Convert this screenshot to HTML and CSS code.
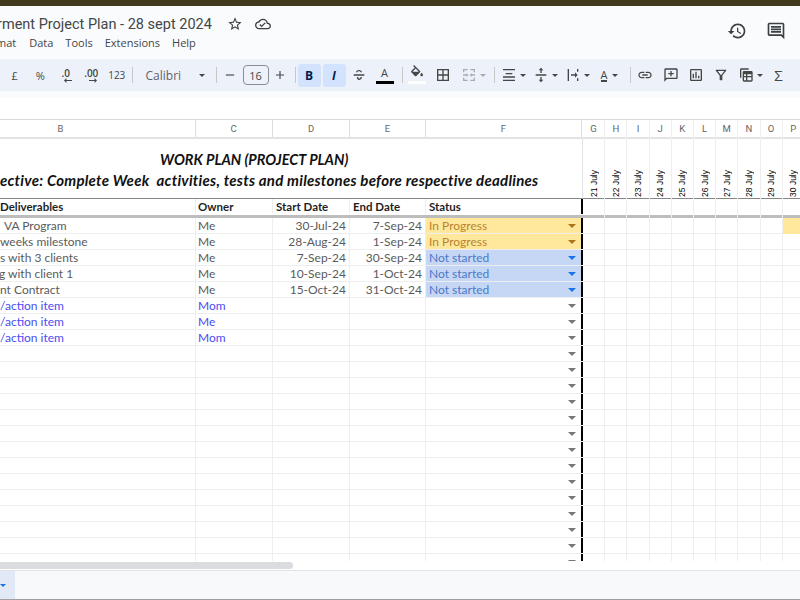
FILE: index.html
```html
<!DOCTYPE html>
<html lang="en">
<head>
	<meta charset="UTF-8">
	<title>Project Plan</title>
	<link rel="stylesheet" href="styles.css">
</head>
<body>
	<div class="top-strip"></div>

	<header class="doc-header">
		<div class="doc-left">
			<div class="title-line">
				<span class="doc-title">rment Project Plan - 28 sept 2024</span>
				<svg class="doc-icon star" viewBox="0 0 24 24"><path d="M22 9.24l-7.19-.62L12 2 9.19 8.63 2 9.24l5.46 4.73L5.82 21 12 17.27 18.18 21l-1.63-7.03L22 9.24zM12 15.4l-3.76 2.27 1-4.28-3.32-2.88 4.38-.38L12 6.1l1.71 4.04 4.38.38-3.32 2.88 1 4.28L12 15.4z"/></svg>
				<svg class="doc-icon cloud" viewBox="0 0 24 24"><path d="M19.35 10.04C18.67 6.59 15.64 4 12 4 9.11 4 6.6 5.64 5.35 8.04 2.34 8.36 0 10.91 0 14c0 3.31 2.69 6 6 6h13c2.76 0 5-2.24 5-5 0-2.64-2.05-4.78-4.65-4.96zM19 18H6c-2.21 0-4-1.79-4-4 0-2.05 1.53-3.76 3.56-3.97l1.07-.11.5-.95C8.08 7.14 9.94 6 12 6c2.62 0 4.88 1.86 5.39 4.43l.3 1.5 1.53.11c1.56.1 2.78 1.41 2.78 2.96 0 1.65-1.35 3-3 3zm-9-3.82l-2.09-2.09L6.5 13.5 10 17l6.01-6.01-1.41-1.41z"/></svg>
			</div>
			<nav class="menu">
				<span class="menu-clip">mat</span>
				<span>Data</span>
				<span>Tools</span>
				<span>Extensions</span>
				<span>Help</span>
			</nav>
		</div>
		<div class="doc-right">
			<svg class="head-icon" viewBox="0 0 24 24"><path d="M13 3c-4.97 0-9 4.03-9 9H1l3.89 3.89.07.14L9 12H6c0-3.87 3.13-7 7-7s7 3.13 7 7-3.13 7-7 7c-1.93 0-3.68-.79-4.94-2.06l-1.42 1.42C8.27 19.99 10.51 21 13 21c4.97 0 9-4.03 9-9s-4.03-9-9-9zm-1 5v5l4.28 2.54.72-1.21-3.5-2.08V8H12z"/></svg>
			<svg class="head-icon" viewBox="0 0 24 24"><path d="M21.99 4c0-1.1-.89-2-1.99-2H4c-1.1 0-2 .9-2 2v12c0 1.1.9 2 2 2h14l4 4-.01-18zM20 4v13.17L18.83 16H4V4h16zM6 12h12v2H6zm0-3h12v2H6zm0-3h12v2H6z"/></svg>
		</div>
	</header>

	<div class="toolbar">
		<span class="tool num">£</span>
		<span class="tool num">%</span>
		<span class="tool num dec">.0<svg viewBox="0 0 10 6"><path d="M10 2.5H3V0L0 3l3 3V3.500h7z"/></svg></span>
		<span class="tool num dec">.00<svg viewBox="0 0 10 6"><path d="M0 2.500h7V0l3 3-3 3V3.500H0z"/></svg></span>
		<span class="tool num small">123</span>
		<span class="sep"></span>
		<span class="font-select">Calibri<i class="caret"></i></span>
		<span class="sep"></span>
		<span class="tool step minus"><svg viewBox="0 0 24 24"><path d="M5 11h14v2H5z"/></svg></span>
		<span class="size-box">16</span>
		<span class="tool step plus"><svg viewBox="0 0 24 24"><path d="M19 13h-6v6h-2v-6H5v-2h6V5h2v6h6z"/></svg></span>
		<span class="sep sep-format"></span>
		<span class="tool on bold">B</span>
		<span class="tool on italic">I</span>
		<span class="tool strike"><svg viewBox="0 0 24 24"><path d="M4 11h16v2H4zM7.500 8c0-2 2-3.500 4.500-3.500S16.500 6 16.500 8h-2c0-1-1-1.700-2.500-1.700S9.500 7 9.500 8zM9 15h2c0 1.300.5 2.500 1 2.500s2.500-.5 2.500-2.500h2c0 2.500-2 4.500-4.500 4.500S9 17.500 9 15z"/></svg></span>
		<span class="tool text-color">A<i></i></span>
		<span class="sep sep-cell"></span>
		<span class="tool fill"><svg viewBox="0 0 24 24"><path d="M16.560 8.940L7.620 0 6.210 1.410l2.380 2.380-5.150 5.150c-.59.59-.59 1.540 0 2.120l5.500 5.500c.29.29.68.44 1.060.44s.77-.15 1.060-.44l5.500-5.500c.59-.58.59-1.530 0-2.120zM5.210 10L10 5.210 14.790 10H5.210zM19 11.500s-2 2.170-2 3.500c0 1.100.9 2 2 2s2-.9 2-2c0-1.330-2-3.500-2-3.500z"/></svg><i></i></span>
		<span class="tool"><svg viewBox="0 0 24 24"><path d="M3 3v18h18V3H3zm8 16H5v-6h6v6zm0-8H5V5h6v6zm8 8h-6v-6h6v6zm0-8h-6V5h6v6z"/></svg></span>
		<span class="tool split off"><svg viewBox="0 0 24 24"><path d="M3 3h7v2H5v3H3zM14 3h7v5h-2V5h-5zM3 16h2v3h5v2H3zM19 16h2v5h-7v-2h5zM3 11h5V9l3 3-3 3v-2H3zM21 11h-5V9l-3 3 3 3v-2h5z"/></svg><i class="caret"></i></span>
		<span class="sep sep-align"></span>
		<span class="tool split"><svg viewBox="0 0 24 24"><path d="M3 3h18v2H3zM7 9h10v2H7zM3 14h18v2H3zM3 19h18v2H3z"/></svg><i class="caret"></i></span>
		<span class="tool split"><svg viewBox="0 0 24 24"><path d="M4 11h16v2H4zM12 1l3.500 4H13v4h-2V5H8.500zM12 23l-3.500-4H11v-4h2v4h2.500z"/></svg><i class="caret"></i></span>
		<span class="tool split"><svg viewBox="0 0 24 24"><path d="M4 3h2v18H4zM18 3h2v4h-2zM18 17h2v4h-2zM9 11h6V8l4 4-4 4v-3H9z"/></svg><i class="caret"></i></span>
		<span class="tool split rotate"><b>A</b><i class="caret"></i></span>
		<span class="sep sep-insert"></span>
		<span class="tool"><svg viewBox="0 0 24 24"><path d="M3.900 12c0-1.710 1.390-3.100 3.100-3.100h4V7H7c-2.760 0-5 2.240-5 5s2.240 5 5 5h4v-1.900H7c-1.710 0-3.100-1.390-3.100-3.100zM8 13h8v-2H8v2zm9-6h-4v1.900h4c1.710 0 3.100 1.390 3.100 3.100s-1.390 3.100-3.100 3.100h-4V17h4c2.760 0 5-2.240 5-5s-2.240-5-5-5z"/></svg></span>
		<span class="tool"><svg viewBox="0 0 24 24"><path d="M20 2H4c-1.100 0-2 .9-2 2v18l4-4h14c1.100 0 2-.9 2-2V4c0-1.100-.9-2-2-2zm0 14H5.170L4 17.170V4h16v12zM11 14h2v-3h3V9h-3V6h-2v3H8v2h3z"/></svg></span>
		<span class="tool slim"><svg viewBox="0 0 24 24"><path d="M19 3H5c-1.100 0-2 .9-2 2v14c0 1.100.9 2 2 2h14c1.100 0 2-.9 2-2V5c0-1.100-.9-2-2-2zm0 16H5V5h14v14zM7 10h2v7H7zm4-3h2v10h-2zm4 6h2v4h-2z"/></svg></span>
		<span class="tool slim"><svg viewBox="0 0 24 24"><path d="M7 6h10l-5.010 6.300L7 6zm-2.750-.39C6.270 8.200 10 13 10 13v6c0 .55.45 1 1 1h2c.55 0 1-.45 1-1v-6s3.720-4.800 5.740-7.390c.51-.66.04-1.610-.79-1.610H5.040c-.83 0-1.300.95-.79 1.610z"/></svg></span>
		<span class="tool split"><svg viewBox="0 0 24 24"><path d="M5 2h11v2H5v12H3V4c0-1.100.9-2 2-2zM9 6h11c1.100 0 2 .9 2 2v12c0 1.100-.9 2-2 2H9c-1.100 0-2-.9-2-2V8c0-1.100.9-2 2-2zm0 5v2.500h3V11zm5 0v2.500h6V11zm-5 4.500V20h3v-4.500zm5 0V20h6v-4.500z"/></svg><i class="caret"></i></span>
		<span class="tool sigma">Σ</span>
	</div>
	<div class="toolbar-under"></div>
	<div class="formula-gap"></div>

	<div class="sheet">
		<div class="main">
			<div class="col-heads">
				<span class="cell cb">B</span>
				<span class="cell cc">C</span>
				<span class="cell cd">D</span>
				<span class="cell ce">E</span>
				<span class="cell cf">F</span>
			</div>
			<div class="plan-title">
				<p class="plan-name">WORK PLAN (PROJECT PLAN)</p>
				<p class="plan-goal">ective: Complete Week  activities, tests and milestones before respective deadlines</p>
			</div>
			<div class="row head-row">
				<span class="cell cb">Deliverables</span>
				<span class="cell cc">Owner</span>
				<span class="cell cd">Start Date</span>
				<span class="cell ce">End Date</span>
				<span class="cell cf">Status</span>
			</div>
			<div class="row">
				<span class="cell cb indent">VA Program</span>
				<span class="cell cc">Me</span>
				<span class="cell cd">30-Jul-24</span>
				<span class="cell ce">7-Sep-24</span>
				<span class="cell cf progress">In Progress<i class="drop"></i></span>
			</div>
			<div class="row">
				<span class="cell cb">weeks milestone</span>
				<span class="cell cc">Me</span>
				<span class="cell cd">28-Aug-24</span>
				<span class="cell ce">1-Sep-24</span>
				<span class="cell cf progress">In Progress<i class="drop"></i></span>
			</div>
			<div class="row">
				<span class="cell cb">s with 3 clients</span>
				<span class="cell cc">Me</span>
				<span class="cell cd">7-Sep-24</span>
				<span class="cell ce">30-Sep-24</span>
				<span class="cell cf waiting">Not started<i class="drop"></i></span>
			</div>
			<div class="row">
				<span class="cell cb clip">g with client 1</span>
				<span class="cell cc">Me</span>
				<span class="cell cd">10-Sep-24</span>
				<span class="cell ce">1-Oct-24</span>
				<span class="cell cf waiting">Not started<i class="drop"></i></span>
			</div>
			<div class="row">
				<span class="cell cb">nt Contract</span>
				<span class="cell cc">Me</span>
				<span class="cell cd">15-Oct-24</span>
				<span class="cell ce">31-Oct-24</span>
				<span class="cell cf waiting">Not started<i class="drop"></i></span>
			</div>
			<div class="row todo">
				<span class="cell cb">/action item</span>
				<span class="cell cc">Mom</span>
				<span class="cell cd"></span>
				<span class="cell ce"></span>
				<span class="cell cf"><i class="drop"></i></span>
			</div>
			<div class="row todo">
				<span class="cell cb">/action item</span>
				<span class="cell cc">Me</span>
				<span class="cell cd"></span>
				<span class="cell ce"></span>
				<span class="cell cf"><i class="drop"></i></span>
			</div>
			<div class="row todo">
				<span class="cell cb">/action item</span>
				<span class="cell cc">Mom</span>
				<span class="cell cd"></span>
				<span class="cell ce"></span>
				<span class="cell cf"><i class="drop"></i></span>
			</div>
			<div class="row"><span class="cell cb"></span><span class="cell cc"></span><span class="cell cd"></span><span class="cell ce"></span><span class="cell cf"><i class="drop"></i></span></div>
			<div class="row"><span class="cell cb"></span><span class="cell cc"></span><span class="cell cd"></span><span class="cell ce"></span><span class="cell cf"><i class="drop"></i></span></div>
			<div class="row"><span class="cell cb"></span><span class="cell cc"></span><span class="cell cd"></span><span class="cell ce"></span><span class="cell cf"><i class="drop"></i></span></div>
			<div class="row"><span class="cell cb"></span><span class="cell cc"></span><span class="cell cd"></span><span class="cell ce"></span><span class="cell cf"><i class="drop"></i></span></div>
			<div class="row"><span class="cell cb"></span><span class="cell cc"></span><span class="cell cd"></span><span class="cell ce"></span><span class="cell cf"><i class="drop"></i></span></div>
			<div class="row"><span class="cell cb"></span><span class="cell cc"></span><span class="cell cd"></span><span class="cell ce"></span><span class="cell cf"><i class="drop"></i></span></div>
			<div class="row"><span class="cell cb"></span><span class="cell cc"></span><span class="cell cd"></span><span class="cell ce"></span><span class="cell cf"><i class="drop"></i></span></div>
			<div class="row"><span class="cell cb"></span><span class="cell cc"></span><span class="cell cd"></span><span class="cell ce"></span><span class="cell cf"><i class="drop"></i></span></div>
			<div class="row"><span class="cell cb"></span><span class="cell cc"></span><span class="cell cd"></span><span class="cell ce"></span><span class="cell cf"><i class="drop"></i></span></div>
			<div class="row"><span class="cell cb"></span><span class="cell cc"></span><span class="cell cd"></span><span class="cell ce"></span><span class="cell cf"><i class="drop"></i></span></div>
			<div class="row"><span class="cell cb"></span><span class="cell cc"></span><span class="cell cd"></span><span class="cell ce"></span><span class="cell cf"><i class="drop"></i></span></div>
			<div class="row"><span class="cell cb"></span><span class="cell cc"></span><span class="cell cd"></span><span class="cell ce"></span><span class="cell cf"><i class="drop"></i></span></div>
			<div class="row"><span class="cell cb"></span><span class="cell cc"></span><span class="cell cd"></span><span class="cell ce"></span><span class="cell cf"><i class="drop"></i></span></div>
			<div class="row"><span class="cell cb"></span><span class="cell cc"></span><span class="cell cd"></span><span class="cell ce"></span><span class="cell cf"><i class="drop"></i></span></div>
		</div>
		<div class="days">
			<div class="day"><span class="day-letter">G</span><span class="day-date"><b>21 July</b></span><span class="day-head"></span><span class="day-cells"></span></div>
			<div class="day"><span class="day-letter">H</span><span class="day-date"><b>22 July</b></span><span class="day-head"></span><span class="day-cells"></span></div>
			<div class="day"><span class="day-letter">I</span><span class="day-date"><b>23 July</b></span><span class="day-head"></span><span class="day-cells"></span></div>
			<div class="day"><span class="day-letter">J</span><span class="day-date"><b>24 July</b></span><span class="day-head"></span><span class="day-cells"></span></div>
			<div class="day"><span class="day-letter">K</span><span class="day-date"><b>25 July</b></span><span class="day-head"></span><span class="day-cells"></span></div>
			<div class="day"><span class="day-letter">L</span><span class="day-date"><b>26 July</b></span><span class="day-head"></span><span class="day-cells"></span></div>
			<div class="day"><span class="day-letter">M</span><span class="day-date"><b>27 July</b></span><span class="day-head"></span><span class="day-cells"></span></div>
			<div class="day"><span class="day-letter">N</span><span class="day-date"><b>28 July</b></span><span class="day-head"></span><span class="day-cells"></span></div>
			<div class="day"><span class="day-letter">O</span><span class="day-date"><b>29 July</b></span><span class="day-head"></span><span class="day-cells"></span></div>
			<div class="day"><span class="day-letter">P</span><span class="day-date"><b>30 July</b></span><span class="day-head"></span><span class="day-cells"><i class="day-mark"></i></span></div>
		</div>
	</div>

	<div class="scroll-track"><div class="scroll-thumb"></div></div>

	<footer class="tabs-bar">
		<div class="tab-stub"><i class="caret"></i></div>
	</footer>
</body>
</html>
```

FILE: styles.css
```css
* {
	box-sizing: border-box;
}
html, body {
	margin: 0;
	height: 100%;
}
body {
	width: 800px;
	height: 600px;
	overflow: hidden;
	display: flex;
	flex-direction: column;
	background-color: #f9fbfd;
	font-family: "Open Sans", "Liberation Sans", sans-serif;
	color: #444746;
}
p {
	margin: 0;
}

.top-strip {
	height: 6px;
	flex: none;
	background-color: #423a1e;
}

/* title + menu */
.doc-header {
	height: 53px;
	display: flex;
	justify-content: space-between;
	flex: none;
}
.doc-left {
	padding-top: 6px;
}
.title-line {
	height: 24px;
	display: flex;
	align-items: center;
}
.doc-title {
	margin-left: -3px;
	font-family: "Roboto", sans-serif;
	font-size: 14.500px;
	color: #444746;
	white-space: nowrap;
}
.doc-icon {
	width: 16px;
	height: 16px;
	margin-left: 12px;
	fill: #3c4043;
}
.doc-icon.star {
	margin-left: 15px;
}
.menu {
	margin-top: -1px;
	display: flex;
	gap: 12px;
	font-size: 11px;
	line-height: 16px;
	color: #444746;
}
.menu-clip {
	margin-left: -4px;
	margin-right: 1px;
}
.doc-right {
	display: flex;
	gap: 19px;
	padding: 15px 14px 0 0;
}
.head-icon {
	width: 20px;
	height: 20px;
	fill: #3c4043;
}

/* toolbar */
.toolbar {
	height: 32px;
	flex: none;
	display: flex;
	align-items: center;
	gap: 2px;
	padding-left: 3px;
	background-color: #edf2fa;
	font-size: 11px;
}
.tool {
	width: 24px;
	height: 23px;
	display: flex;
	flex: none;
	align-items: center;
	justify-content: center;
	border-radius: 3px;
	position: relative;
	color: #444746;
}
.tool svg {
	width: 16px;
	height: 16px;
	fill: #444746;
}
.tool.num {
	width: 23.500px;
}
.tool.small {
	font-size: 10px;
}
.tool.dec {
	flex-direction: column;
	font-weight: 600;
	font-size: 10px;
	line-height: 9px;
	padding-top: 2px;
}
.tool.dec svg {
	width: 8px;
	height: 5px;
	margin-left: 4px;
}
.sep {
	width: 1px;
	height: 16px;
	flex: none;
	margin: 0 1px;
	background-color: #c7c7c7;
}
.sep-format {
	margin: 0 0 0 4px;
}
.sep-cell {
	margin: 0 0 0 3px;
}
.sep-align {
	margin: 0 1px 0 3px;
}
.sep-insert {
	margin: 0 0 0 2px;
}
.font-select {
	width: 67px;
	margin: 0 8px 0 2px;
	display: flex;
	justify-content: space-between;
	align-items: center;
	font-size: 12px;
	padding-left: 8px;
	color: #5f6368;
}
.caret {
	width: 0;
	height: 0;
	display: block;
	flex: none;
	border-left: 3.500px solid transparent;
	border-right: 3.500px solid transparent;
	border-top: 3.500px solid #444746;
}
.tool.step {
	width: 18px;
}
.tool.step svg {
	width: 14px;
	height: 14px;
}
.tool.minus {
	margin-left: 1px;
}
.size-box {
	width: 26px;
	height: 20px;
	margin-left: 2px;
	flex: none;
	display: flex;
	align-items: center;
	justify-content: center;
	border: 1px solid #8a8d91;
	border-radius: 4px;
	font-size: 11px;
	color: #444746;
}
.tool.on {
	width: 23px;
	background-color: #d3e3fd;
	font-size: 12px;
	color: #041e49;
}
.tool.bold {
	font-weight: 700;
}
.tool.italic {
	font-style: italic;
	font-weight: 700;
}
.tool.strike {
	width: 23px;
}
.tool.slim {
	width: 23px;
}
.text-color {
	font-size: 11px;
	line-height: 12px;
	padding-bottom: 5px;
}
.text-color i {
	position: absolute;
	left: 3px;
	right: 3px;
	bottom: 3px;
	height: 3px;
	background-color: #000000;
}
.fill svg {
	margin-bottom: 5px;
}
.fill i {
	position: absolute;
	left: 3px;
	right: 3px;
	bottom: 3px;
	height: 3px;
	background-color: #ffffff;
}
.tool.split {
	width: 30px;
	justify-content: flex-start;
	gap: 3px;
	padding-left: 3px;
}
.tool.off {
	width: 32px;
	opacity: 0.4;
	padding-left: 4px;
}
.tool.rotate {
	margin-left: 2px;
}
.rotate b {
	font-size: 11px;
	font-weight: 400;
	border-bottom: 2px solid #444746;
	line-height: 11px;
	margin: 0 2px;
}
.sigma {
	font-size: 15px;
}
.toolbar-under {
	height: 7px;
	flex: none;
	background-color: #f9fbfd;
}
.formula-gap {
	height: 21px;
	flex: none;
	background-color: #ffffff;
}

/* sheet */
.sheet {
	height: 442px;
	flex: none;
	display: flex;
	overflow: hidden;
	background-color: #ffffff;
	font-family: "Lato", "Liberation Sans", sans-serif;
	font-size: 12px;
	color: #5b5b5b;
	border-top: 1px solid #d9d9d9;
}
.main {
	width: 583px;
	flex: none;
}
.col-heads, .row {
	display: flex;
}
.col-heads {
	height: 19px;
	border-bottom: 2px solid #e3e3e3;
	font-family: "Roboto", sans-serif;
	font-size: 9.500px;
	color: #666666;
}
.col-heads .cell {
	justify-content: center;
	border-right: 1px solid #dedede;
}
.col-heads .cb {
	padding-right: 74px;
}
.cell {
	display: flex;
	align-items: center;
	flex: none;
	position: relative;
	white-space: nowrap;
	overflow: hidden;
	padding: 0 3px;
	line-height: 14px;
	border-right: 1px solid #eeeeee;
}
.cb { width: 196px; padding-left: 0; }
.cc { width: 77px; padding-left: 2px; }
.cd { width: 77px; justify-content: flex-end; }
.ce { width: 76px; justify-content: flex-end; }
.cf { width: 157px; }
.col-heads .cf { width: 156px; }
.indent { padding-left: 4px; }
.clip { padding-left: 0; text-indent: -1px; }

.plan-title {
	height: 60px;
	padding-top: 11px;
	border-bottom: 1px solid #858585;
	border-right: 1px solid #e3e3e3;
	font-weight: 700;
	font-style: italic;
	font-size: 14.500px;
	line-height: 20px;
	color: #111111;
	overflow: hidden;
}
.plan-name {
	padding-left: 160px;
}
.plan-goal {
	white-space: pre;
	font-size: 15px;
	letter-spacing: 0.25px;
}
.row {
	height: 16px;
	border-bottom: 1px solid #eeeeee;
}
.head-row {
	height: 19px;
	padding-bottom: 1px;
	border-bottom: 3.500px solid #bdbdbd;
	font-size: 11.500px;
	font-weight: 700;
	color: #1f1f1f;
}
.head-row .cell {
	justify-content: flex-start;
}
.main .row .cf {
	border-right: 2px solid #000000;
	padding-right: 0;
}
.progress {
	background-color: #ffe89c;
	color: #b8842f;
}
.waiting {
	background-color: #c6d7f5;
	color: #4a78c9;
}
.todo {
	color: #4c4cf0;
}
.drop {
	position: absolute;
	right: 5px;
	top: 6px;
	border-left: 4px solid transparent;
	border-right: 4px solid transparent;
	border-top: 4px solid #777777;
}
.progress .drop {
	border-top-color: #a9761c;
}
.waiting .drop {
	border-top-color: #1a73e8;
}

/* date columns */
.days {
	flex: 1;
	display: flex;
	overflow: hidden;
}
.day {
	flex: 0 0 22.200px;
	display: flex;
	flex-direction: column;
	border-right: 1px solid #eeeeee;
}
.day-letter {
	height: 19px;
	display: flex;
	align-items: center;
	justify-content: center;
	border-bottom: 2px solid #e3e3e3;
	font-family: "Roboto", sans-serif;
	font-size: 9.500px;
	color: #666666;
}
.day-date {
	height: 60px;
	display: flex;
	align-items: flex-end;
	justify-content: center;
	border-bottom: 1px solid #858585;
	padding-bottom: 1px;
}
.day-date b {
	writing-mode: vertical-rl;
	transform: rotate(180deg);
	font-family: "Liberation Sans", sans-serif;
	font-size: 8.500px;
	font-weight: 400;
	color: #000000;
	line-height: 10px;
	white-space: nowrap;
}
.day-head {
	height: 19px;
	border-bottom: 3.500px solid #bdbdbd;
}
.day-cells {
	flex: 1;
	background-image: repeating-linear-gradient(to bottom, transparent 0, transparent 15px, #eeeeee 15px, #eeeeee 16px);
}
.day-mark {
	display: block;
	height: 16px;
	background-color: #ffe89c;
}

/* bottom */
.scroll-track {
	height: 9px;
	flex: none;
	background-color: #ffffff;
	padding: 1px 0;
}
.scroll-thumb {
	width: 293px;
	height: 7px;
	border-radius: 0 4px 4px 0;
	background-color: #dadce0;
}
.tabs-bar {
	height: 30px;
	flex: none;
	background-color: #f8f9fb;
	border-top: 1px solid #e1e3e6;
	border-bottom: 1px solid #a0a0a0;
}
.tab-stub {
	width: 15px;
	height: 100%;
	display: flex;
	align-items: center;
	background-color: #e1e9f7;
}
.tab-stub .caret {
	border-top-color: #1a73e8;
}
```
